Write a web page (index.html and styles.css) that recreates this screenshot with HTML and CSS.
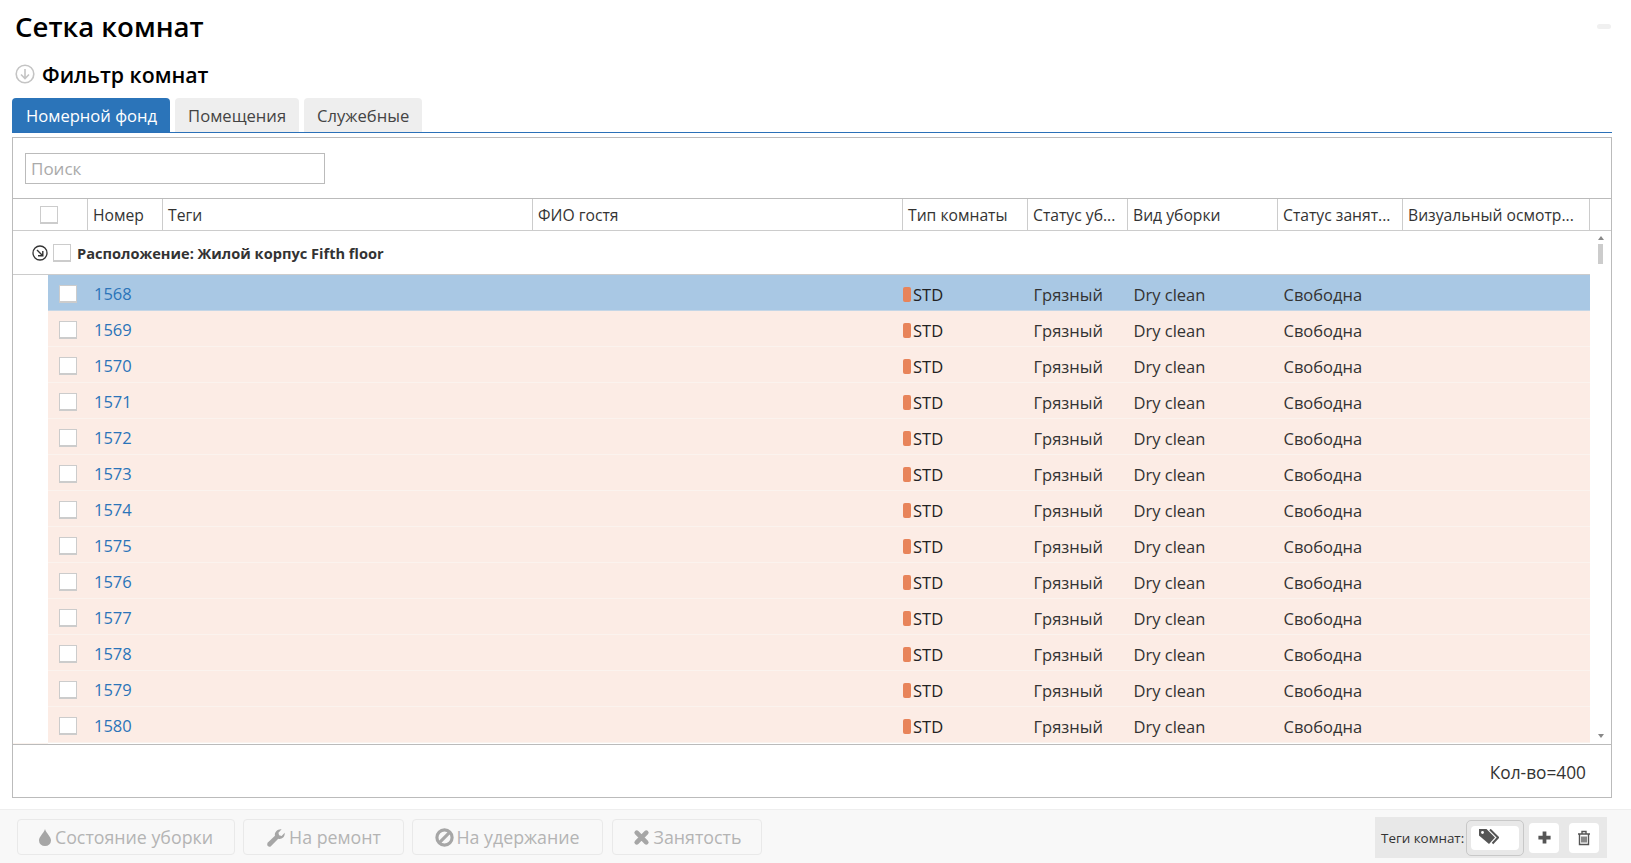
FILE: index.html
```html
<!DOCTYPE html>
<html lang="ru">
<head>
<meta charset="utf-8">
<title>Сетка комнат</title>
<link rel="stylesheet" href="styles.css">
</head>
<body>
<div class="page">
  <div class="top">
    <h1 class="title">Сетка комнат</h1>
    <span class="top-mark"></span>
  </div>
  <div class="filter">
    <svg class="filter-icon" viewBox="0 0 20 20"><circle cx="10" cy="10" r="8.8" fill="none" stroke="#c4c4c4" stroke-width="1.6"/><path d="M10 5v9M6 10.5l4 4 4-4" fill="none" stroke="#c4c4c4" stroke-width="1.6"/></svg>
    <span>Фильтр комнат</span>
  </div>
  <div class="tabs">
    <div class="tab tab-active">Номерной фонд</div>
    <div class="tab">Помещения</div>
    <div class="tab">Служебные</div>
  </div>
  <div class="panel">
    <div class="search-bar"><div class="search">Поиск</div></div>
    <div class="grid-line head">
      <div class="h-cell h-check"><span class="cb"></span></div>
      <div class="h-cell">Номер</div>
      <div class="h-cell">Теги</div>
      <div class="h-cell">ФИО гостя</div>
      <div class="h-cell">Тип комнаты</div>
      <div class="h-cell">Статус уб...</div>
      <div class="h-cell">Вид уборки</div>
      <div class="h-cell">Статус занят...</div>
      <div class="h-cell">Визуальный осмотр...</div>
      <div class="h-cell h-end"></div>
    </div>
    <div class="body-wrap">
      <div class="rows" id="rows">
        <div class="group">
          <svg class="group-icon" viewBox="0 0 16 16"><circle cx="8" cy="8" r="7" fill="none" stroke="#333" stroke-width="1.3"/><path d="M5 5l5.5 5.5M10.8 6v4.8H6" fill="none" stroke="#333" stroke-width="1.4"/></svg>
          <span class="cb"></span>
          <span class="group-label">Расположение: Жилой корпус Fifth floor</span>
        </div>
      </div>
      <div class="scroll">
        <span class="arrow-up"></span>
        <span class="thumb"></span>
        <span class="arrow-down"></span>
      </div>
    </div>
    <div class="count">Кол-во=400</div>
  </div>
  <div class="footer">
    <button class="btn b1"><svg class="ic" viewBox="0 0 12 17"><path d="M6 0C5 4 0 7.500 0 11.500A6 5.500 0 0 0 12 11.500C12 7.500 7 4 6 0z" fill="#a6a6a6"/></svg>Состояние уборки</button>
    <button class="btn b2"><svg class="ic ic-w" viewBox="0 0 18 18"><path d="M1 14.500L8.500 7.400C7.700 4.600 10.400 .7 14.800 1.200L11.800 4.400l.6 2.400 2.400.7 2.900-2.900c.4 4.200-3.100 6.600-6.100 5.600l-7.200 7.300c-1.800 1.200-4.200-1-2.900-3z" fill="#a6a6a6"/></svg>На ремонт</button>
    <button class="btn b3"><svg class="ic ic-w" viewBox="0 0 18 18"><circle cx="9" cy="9" r="7.200" fill="none" stroke="#a6a6a6" stroke-width="3"/><path d="M4.200 13.800L13.800 4.200" stroke="#a6a6a6" stroke-width="3"/></svg>На удержание</button>
    <button class="btn b4"><svg class="ic ic-x" viewBox="0 0 16 16"><path d="M3.500 3.500l9 9M12.500 3.500l-9 9" stroke="#a6a6a6" stroke-width="4.400" stroke-linecap="round"/></svg>Занятость</button>
    <div class="tags">
      <span class="tags-label">Теги комнат:</span>
      <div class="tags-outer"><div class="tags-inner"><svg class="tag-ic" viewBox="0 0 20 16"><path d="M0 0h7.500l8.500 8.500-6 6.500L0 6.500z" fill="#555"/><path d="M11 0.500l8 8-5.500 6" fill="none" stroke="#555" stroke-width="2"/><circle cx="3.500" cy="3.500" r="1.400" fill="#fff"/></svg></div></div>
      <div class="sq"><svg class="plus" viewBox="0 0 16 16"><path d="M8 1.500v13M1.500 8h13" stroke="#555" stroke-width="4"/></svg></div>
      <div class="sq"><svg class="trash" viewBox="0 0 14 16"><path d="M1 4h12M5 3.500V1.500h4v2M2.500 4v10.500h9V4M5 6.500v6M7 6.500v6M9 6.500v6" fill="none" stroke="#555" stroke-width="1.400"/></svg></div>
    </div>
  </div>
</div>
<script src="rows.js"></script>
</body>
</html>
```
FILE: rows.js
```js
var host = document.getElementById('rows');
for (var n = 1568; n <= 1580; n++) {
  var r = document.createElement('div');
  r.className = 'grid-line row' + (n === 1568 ? ' selected' : '');
  r.innerHTML = '<div class="gutter"></div>' +
    '<div class="cell c-check"><span class="cb"></span></div>' +
    '<div class="cell c-num"><a>' + n + '</a></div>' +
    '<div class="cell"></div><div class="cell"></div>' +
    '<div class="cell c-type"><i class="chip"></i>STD</div>' +
    '<div class="cell c-text">Грязный</div>' +
    '<div class="cell c-text">Dry clean</div>' +
    '<div class="cell c-text">Свободна</div>' +
    '<div class="cell"></div>';
  host.appendChild(r);
}
```
FILE: styles.css
```css
* { box-sizing: border-box; }
html, body { margin: 0; height: 100%; overflow: hidden; background: #fff; }
body { font-family: "Open Sans", "Noto Sans", sans-serif; font-size: 16px; color: #333; }
.page { height: 863px; display: flex; flex-direction: column; }
.top { height: 55px; padding: 7px 20px 0 15px; display: flex; justify-content: space-between; }
.title { margin: 0; font-size: 27.600px; line-height: 38px; font-weight: 600; color: #000; }
.top-mark { width: 14px; height: 5px; margin-top: 17px; background: #f0f0f0; border-radius: 3px; }
.filter { height: 38px; padding-left: 15px; display: flex; align-items: center; gap: 7px; font-size: 21.300px; font-weight: 600; color: #000; }
.filter-icon { width: 20px; height: 20px; }
.tabs { margin: 5px 19px 0 12px; height: 35px; display: flex; gap: 5px; border-bottom: 1px solid #2a70b8; }
.tab { height: 34px; padding: 0 13px; line-height: 35px; font-size: 16.600px; background: #eee; border-radius: 4px 4px 0 0; color: #444; }
.tab-active { background: #2b74b9; color: #fff; padding: 0 13px 0 14px; }
.panel { margin: 4px 0 0 12px; width: 1600px; height: 661px; border: 1px solid #bbb; display: flex; flex-direction: column; }
.search-bar { height: 61px; padding: 15px 0 0 12px; border-bottom: 1px solid #bbb; flex: none; }
.search { width: 300px; height: 31px; border: 1px solid #bbb; padding-left: 5px; line-height: 29px; font-size: 17px; color: #aaa; }
.grid-line { display: grid; grid-template-columns: 35px 39px 75px 370px 370px 125px 100px 150px 125px 187px; }
.head { height: 32px; flex: none; grid-template-columns: 75px 75px 370px 370px 125px 100px 150px 125px 187px 21px; border-bottom: 1px solid #ccc; }
.h-cell { border-right: 1px solid #ccc; padding-left: 5px; line-height: 32px; font-size: 15.700px; white-space: nowrap; overflow: hidden; color: #333; }
.h-check { display: flex; align-items: center; padding-left: 27px; }
.h-end { border-right: 0; }
.cb { display: block; width: 18px; height: 18px; flex: none; background: #fff; border: 1px solid #ccc; border-bottom-width: 2px; }
.body-wrap { flex: 1; min-height: 0; display: flex; border-bottom: 1px solid #bbb; }
.rows { width: 1577px; flex: none; overflow: hidden; }
.group { height: 44px; display: flex; align-items: center; padding-left: 19px; border-bottom: 1px solid #ccc; }
.group-icon { width: 16px; height: 16px; margin-right: 5px; }
.group-label { margin-left: 6px; font-weight: 700; font-size: 14.600px; color: #333; }
.row { height: 36px; background: #fcece5; border-bottom: 1px solid #fbf3ee; }
.row.selected { background: #a9c8e4; border-bottom-color: #c4d6e6; }
.gutter { background: #fff; border-bottom: 1px solid #fbf3ee; }
.cell { padding-left: 5px; line-height: 35px; white-space: nowrap; font-size: 16.500px; }
.c-check { padding-left: 11px; padding-top: 1px; display: flex; align-items: center; }
.c-num { padding-left: 7px; padding-top: 1px; }
.c-num a { color: #2b74b9; font-size: 16.500px; }
.c-type { padding-left: 1px; padding-top: 2px; display: flex; align-items: center; color: #222; }
.c-text { color: #333; padding-left: 6.500px; padding-top: 2px; }
.chip { display: block; width: 8px; height: 15px; margin-right: 2px; background: #e8845a; border-radius: 2px; }
.scroll { flex: 1; display: flex; flex-direction: column; align-items: center; }
.arrow-up { margin-top: 5px; width: 0; height: 0; border: 3px solid transparent; border-top: 0; border-bottom: 4px solid #888; }
.thumb { margin-top: 4px; width: 5px; height: 20px; background: #ccc; }
.arrow-down { margin-top: auto; margin-bottom: 6px; width: 0; height: 0; border: 3px solid transparent; border-bottom: 0; border-top: 4px solid #888; }
.count { height: 52px; flex: none; text-align: right; padding-right: 25px; line-height: 55px; font-size: 17.300px; color: #333; }
.footer { margin-top: 11px; flex: 1; background: #f8f8f8; border-top: 1px solid #eee; display: flex; align-items: flex-start; padding: 9px 24px 0 17px; }
.btn { height: 36px; padding: 0; display: flex; align-items: center; justify-content: center; gap: 4px; background: #f8f8f8; border: 1px solid #e9e9e9; border-radius: 4px; font: 400 17.800px "Open Sans", sans-serif; color: #b4b4b4; }
.b1 { width: 218px; margin-right: 8px; }
.b2 { width: 161px; margin-right: 8px; }
.b3 { width: 191px; margin-right: 9px; gap: 2px; }
.b4 { width: 150px; }
.ic { width: 12px; height: 17px; }
.ic-w { width: 19px; height: 19px; }
.ic-x { width: 17px; height: 17px; }
.tags { margin-left: auto; margin-top: -2px; width: 232px; height: 41px; background: #e8e8e8; display: flex; align-items: center; padding-left: 6px; }
.tags-label { font-size: 13.400px; color: #333; white-space: nowrap; width: 85px; }
.tags-outer { width: 58px; height: 36px; border: 1px solid #c8c8c8; border-radius: 5px; padding: 5px 4px; }
.tags-inner { height: 24px; background: #fff; border-radius: 4px; padding: 3px 8px 0; }
.tag-ic { width: 20px; height: 16px; display: block; }
.sq { width: 30px; height: 30px; background: #fff; border-radius: 4px; margin-left: 5px; display: flex; align-items: center; justify-content: center; }
.sq + .sq { margin-left: 10px; }
.plus { width: 15px; height: 15px; }
.trash { width: 14px; height: 16px; }
```
